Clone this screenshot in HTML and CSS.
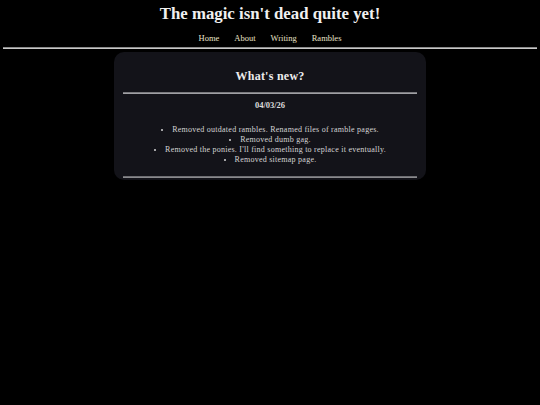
FILE: index.html
```html
<!DOCTYPE html>
<html>
<head>
<meta charset="utf-8">
<title>The magic isn't dead quite yet!</title>
<link rel="stylesheet" href="styles.css">
</head>
<body>
<header class="site-header">
  <h1 class="site-title">The magic isn't dead quite yet!</h1>
  <nav class="site-nav">
    <a href="#">Home</a>
    <a href="#">About</a>
    <a href="#">Writing</a>
    <a href="#">Rambles</a>
  </nav>
  <hr class="rule">
</header>
<main class="news">
  <h2 class="news-title">What's new?</h2>
  <hr class="news-rule">
  <h3 class="news-date">04/03/26</h3>
  <ul class="news-list">
    <li>Removed outdated rambles. Renamed files of ramble pages.</li>
    <li>Removed dumb gag.</li>
    <li>Removed the ponies. I'll find something to replace it eventually.</li>
    <li>Removed sitemap page.</li>
  </ul>
  <hr class="news-rule news-rule-bottom">
</main>
</body>
</html>
```
FILE: styles.css
```css
html, body {
  background: #000;
}
body {
  margin: 0 3px;
  font-family: "Liberation Serif", "Times New Roman", serif;
  color: #e6e6e6;
}
.site-header {
  text-align: center;
}
.site-title {
  margin: 4px 0 0;
  font-size: 16.8px;
  line-height: 20px;
  font-weight: bold;
  color: #f0f0f0;
}
.site-nav {
  margin-top: 8px;
  display: flex;
  justify-content: center;
  gap: 15px;
  font-size: 8.5px;
  line-height: 12px;
}
.site-nav a {
  color: #e8e2c8;
  text-decoration: none;
}
.rule {
  margin: 3px 0 0;
  height: 0;
  border: 0;
  border-top: 1px solid #8a8a8a;
  border-bottom: 1px solid #c8c8c8;
}
.news {
  width: 294px;
  margin: 3px auto 0;
  padding: 17px 9px 2px;
  background: #131319;
  border-radius: 10px;
  text-align: center;
}
.news-title {
  margin: 0;
  font-size: 12px;
  line-height: 14px;
  letter-spacing: 0.25px;
  color: #ececec;
}
.news-rule {
  margin: 9px 0 0;
  height: 0;
  border: 0;
  border-top: 1px solid #7a7a7e;
  border-bottom: 1px solid #a0a0a4;
}
.news-rule-bottom {
  margin-top: 11px;
  border-top-color: #6e6e72;
  border-bottom-color: #8a8a8e;
}
.news-date {
  margin: 4px 0 0;
  font-size: 8.5px;
  line-height: 14px;
  font-weight: bold;
  color: #dcdcdc;
}
.news-list {
  margin: 13px 0 0;
  padding: 0;
  list-style-position: inside;
  font-size: 8px;
  line-height: 10px;
  letter-spacing: 0.25px;
  color: #d4d4d4;
}
```
